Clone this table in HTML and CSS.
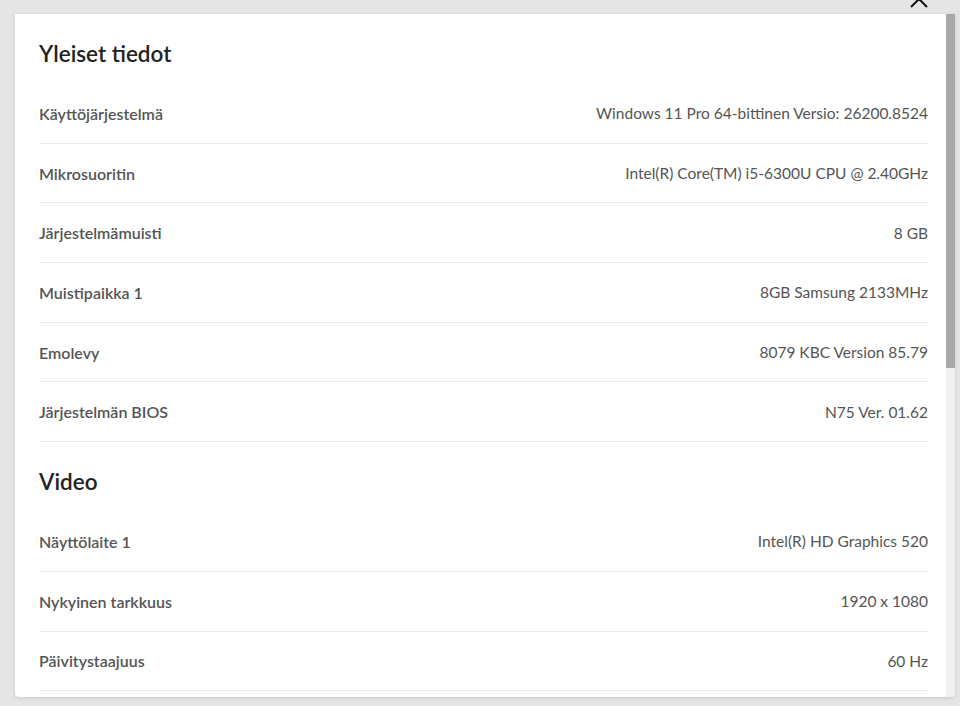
FILE: index.html
```html
<!DOCTYPE html>
<html lang="fi">
<head>
<meta charset="utf-8">
<title>Järjestelmätiedot</title>
<link rel="stylesheet" href="styles.css">
</head>
<body>
<button class="close" aria-label="Sulje">
  <svg width="24" height="24" viewBox="0 0 24 24"><path d="M4 4L20 20M20 4L4 20" stroke="#111" stroke-width="2" fill="none"/></svg>
</button>
<div class="card">
  <div class="content">
    <section class="group">
      <h2 class="group-title">Yleiset tiedot</h2>
      <div class="row"><span class="label">Käyttöjärjestelmä</span><span class="value">Windows 11 Pro 64-bittinen Versio: 26200.8524</span></div>
      <div class="row"><span class="label">Mikrosuoritin</span><span class="value">Intel(R) Core(TM) i5-6300U CPU @ 2.40GHz</span></div>
      <div class="row"><span class="label">Järjestelmämuisti</span><span class="value">8 GB</span></div>
      <div class="row"><span class="label">Muistipaikka 1</span><span class="value">8GB Samsung 2133MHz</span></div>
      <div class="row"><span class="label">Emolevy</span><span class="value">8079 KBC Version 85.79</span></div>
      <div class="row"><span class="label">Järjestelmän BIOS</span><span class="value">N75 Ver. 01.62</span></div>
    </section>
    <section class="group">
      <h2 class="group-title">Video</h2>
      <div class="row"><span class="label">Näyttölaite 1</span><span class="value">Intel(R) HD Graphics 520</span></div>
      <div class="row"><span class="label">Nykyinen tarkkuus</span><span class="value">1920 x 1080</span></div>
      <div class="row"><span class="label">Päivitystaajuus</span><span class="value">60 Hz</span></div>
    </section>
  </div>
  <div class="scrollbar"><div class="thumb"></div></div>
</div>
</body>
</html>
```
FILE: styles.css
```css
html, body {
  margin: 0;
  padding: 0;
  height: 100%;
  overflow: hidden;
}
body {
  background: #e5e5e5;
  font-family: Lato, "Liberation Sans", sans-serif;
  color: #555;
  position: relative;
}
.close {
  position: absolute;
  top: -13px;
  left: 907px;
  border: 0;
  padding: 0;
  background: none;
  width: 24px;
  height: 24px;
}
.card {
  margin: 14px 5px 0 15px;
  height: 683px;
  background: #fff;
  border-radius: 0 0 4px 4px;
  box-shadow: 0 1px 4px rgba(0,0,0,0.12);
  display: flex;
  overflow: hidden;
}
.content {
  flex: 1;
  padding: 0 18px 0 24px;
  overflow: hidden;
}
.group-title {
  margin: 0;
  padding: 24px 0 14px;
  font-size: 22.5px;
  line-height: 32px;
  font-weight: 600;
  color: #222;
}
.row {
  height: 58.7px;
  border-bottom: 1px solid #e9e9e9;
  display: flex;
  align-items: center;
  justify-content: space-between;
  font-size: 16px;
}
.label {
  font-weight: 600;
  color: #555;
}
.value {
  color: #555;
  font-size: 15.5px;
}
.scrollbar {
  width: 9px;
  background: #f1f1f1;
  flex: none;
}
.thumb {
  height: 354px;
  background: #a8a8a8;
}
```
